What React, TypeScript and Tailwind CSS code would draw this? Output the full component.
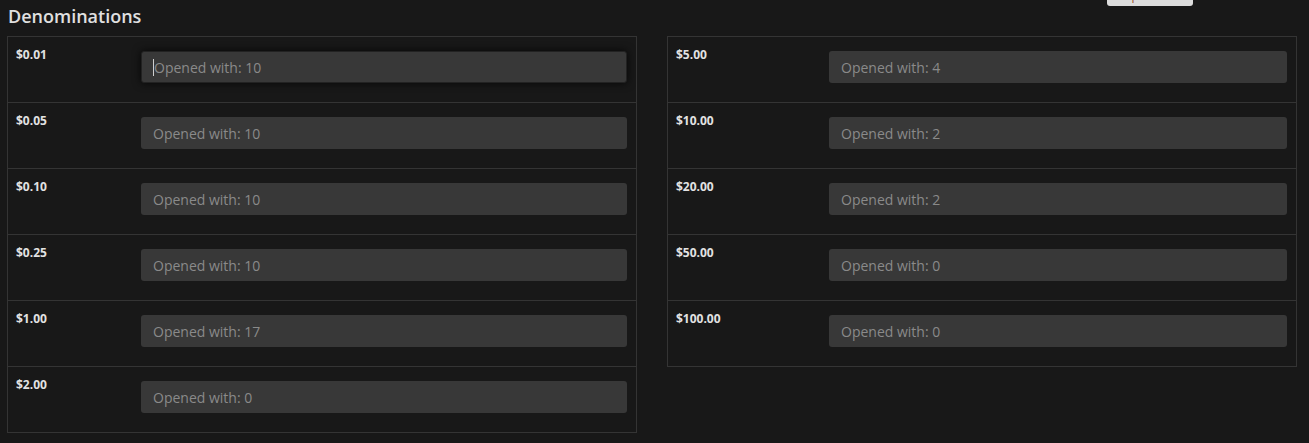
const left = [
  { label: '$0.01', count: 10 },
  { label: '$0.05', count: 10 },
  { label: '$0.10', count: 10 },
  { label: '$0.25', count: 10 },
  { label: '$1.00', count: 17 },
  { label: '$2.00', count: 0 },
]

const right = [
  { label: '$5.00', count: 4 },
  { label: '$10.00', count: 2 },
  { label: '$20.00', count: 2 },
  { label: '$50.00', count: 0 },
  { label: '$100.00', count: 0 },
]

type Row = { label: string; count: number }

function Panel({ rows, labelWidth, focusFirst }: { rows: Row[]; labelWidth: string; focusFirst?: boolean }) {
  return (
    <div className="w-[630px] border border-[#343434] divide-y divide-[#343434]">
      {rows.map((r, i) => (
        <div key={r.label} className="h-[65px] flex pl-2 pr-[9px] box-content">
          <div className={`${labelWidth} shrink-0 pt-[10px] text-[12px] font-bold text-[#e2e2e2] leading-4`}>{r.label}</div>
          <div className="flex-1 pt-[14px]">
            {focusFirst && i === 0 ? (
              <div className="h-8 rounded-[3px] bg-[#383838] border border-[#222] shadow-[0_0_8px_rgba(0,0,0,0.8)] flex items-center px-3 text-[14px] text-[#8a8a8a]">
                <span className="w-px h-[17px] bg-[#cfcfcf] -ml-px"></span>
                Opened with: {r.count}
              </div>
            ) : (
              <div className="h-8 rounded-[3px] bg-[#383838] flex items-center px-3 text-[14px] text-[#8a8a8a]">
                Opened with: {r.count}
              </div>
            )}
          </div>
        </div>
      ))}
    </div>
  )
}

export default function App() {
  return (
    <div className="relative w-[1309px] h-[443px] overflow-hidden bg-[#181818]" style={{ fontFamily: '"Open Sans", sans-serif' }}>
      <div className="absolute left-[1107px] -top-[14px] w-[86px] h-5 rounded-[3px] bg-[#dcdcdc] text-[12px] text-[#a0522d] flex items-center justify-center">
        Pop Drawer
      </div>
      <div className="pl-[7px] pt-[4px]">
        <h2 className="text-[18px] font-semibold text-[#e0e0e0] leading-6 pl-px mb-[8px]">Denominations</h2>
        <div className="flex gap-[30px] items-start">
          <Panel rows={left} labelWidth="w-[125px]" focusFirst />
          <Panel rows={right} labelWidth="w-[153px]" />
        </div>
      </div>
    </div>
  )
}
